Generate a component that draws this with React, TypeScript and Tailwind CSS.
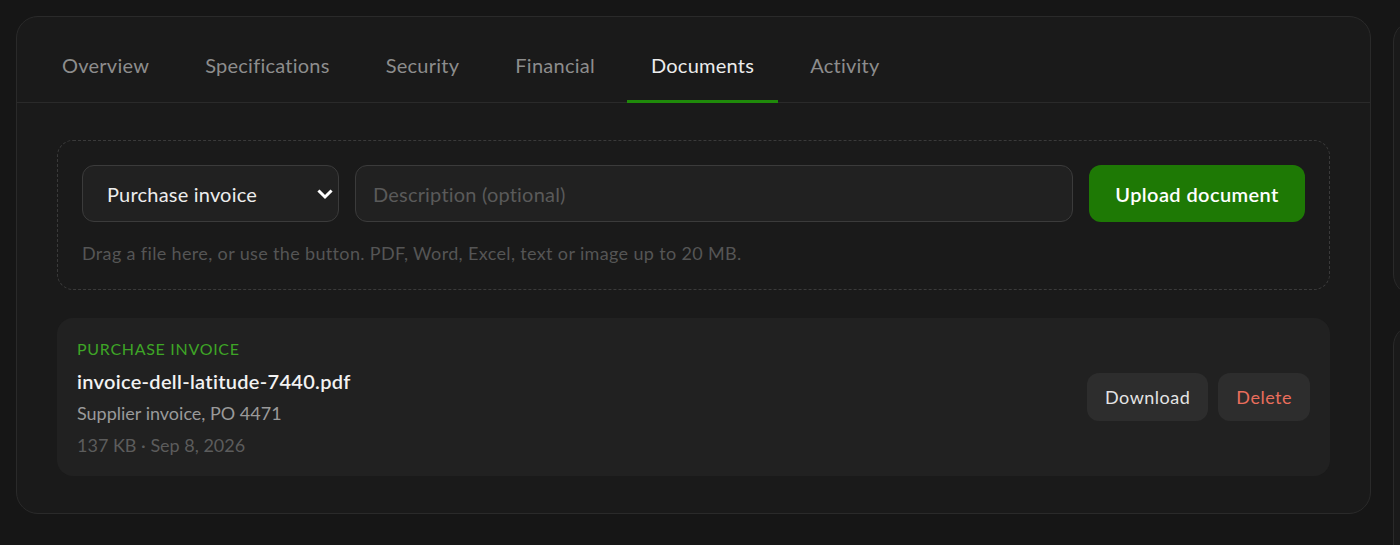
import React from "react";

const tabs = ["Overview", "Specifications", "Security", "Financial", "Documents", "Activity"];

export default function App() {
  return (
    <div
      className="h-[545px] w-full bg-[#161616] p-4 overflow-hidden"
      style={{ fontFamily: "Lato, 'Noto Sans', sans-serif" }}
    >
      <div className="flex gap-[22px] items-start">
        <div className="w-[1355px] shrink-0 rounded-[22px] border border-[#2a2a2a] bg-[#1a1a1a] pt-px">
          <div className="flex gap-2 border-b border-[#2a2a2a] px-[21px]">
            {tabs.map((t) => {
              const active = t === "Documents";
              return (
                <div
                  key={t}
                  className={`relative px-6 h-[84px] pt-[10px] flex items-center text-[20px] tracking-[0.25px] ${
                    active ? "text-[#ececec]" : "text-[#8d8d8d]"
                  }`}
                >
                  {t}
                  {active && (
                    <div className="absolute left-0 right-0 -bottom-px h-[3px] bg-[#1f8a0a]" />
                  )}
                </div>
              );
            })}
          </div>

          <div className="px-10 pt-[37px] pb-[37px] flex flex-col gap-7">
            <div className="rounded-[16px] border border-dashed border-[#3a3a3a] p-6 flex flex-col gap-[19px]">
              <div className="flex gap-4 items-center">
                <div className="w-[257px] h-[57px] rounded-[12px] border border-[#3b3b3b] bg-[#212121] flex items-center justify-between pl-6 pr-[5px] text-[20px] text-[#ededed] tracking-[0.2px]">
                  <span>Purchase invoice</span>
                  <svg width="16" height="12" viewBox="0 0 16 12" fill="none">
                    <path d="M2.5 3.5 L8 9 L13.5 3.5" stroke="#ffffff" strokeWidth="3" strokeLinecap="square" />
                  </svg>
                </div>
                <div className="flex-1 h-[57px] rounded-[12px] border border-[#3b3b3b] bg-[#212121] flex items-center px-[17px] text-[20px] text-[#5a5a5a] tracking-[0.2px]">
                  Description (optional)
                </div>
                <div className="w-[216px] h-[57px] rounded-[12px] bg-[#1e7905] flex items-center justify-center text-[20px] font-semibold text-white tracking-[0.4px]">
                  Upload document
                </div>
              </div>
              <div className="text-[18px] text-[#555555] leading-[24px] tracking-[0.35px]">
                Drag a file here, or use the button. PDF, Word, Excel, text or image up to 20 MB.
              </div>
            </div>

            <div className="rounded-[16px] bg-[#212121] px-5 py-[15px] flex items-center justify-between">
              <div className="flex flex-col">
                <div className="text-[16px] leading-[32px] tracking-[0.7px] text-[#3ea526] uppercase">
                  Purchase invoice
                </div>
                <div className="text-[20px] leading-[32px] font-semibold text-[#f2f2f2] tracking-[0.3px]">
                  invoice-dell-latitude-7440.pdf
                </div>
                <div className="text-[18px] leading-[32px] text-[#9a9a9a]">
                  Supplier invoice, PO 4471
                </div>
                <div className="text-[18px] leading-[32px] text-[#5c5c5c]">
                  137 KB · Sep 8, 2026
                </div>
              </div>
              <div className="flex gap-[10px]">
                <div className="h-[48px] px-[18px] rounded-[12px] bg-[#2d2d2d] flex items-center text-[18px] text-[#e4e4e4] tracking-[0.5px]">
                  Download
                </div>
                <div className="h-[48px] px-[18px] rounded-[12px] bg-[#2d2d2d] flex items-center text-[18px] text-[#ea6e5c] tracking-[0.5px]">
                  Delete
                </div>
              </div>
            </div>
          </div>
        </div>

        <div className="w-[300px] shrink-0 flex flex-col gap-7 pt-[4px]">
          <div className="h-[276px] rounded-[22px] border border-[#2a2a2a] bg-[#1a1a1a]" />
          <div className="h-[300px] rounded-[22px] border border-[#2a2a2a] bg-[#1a1a1a]" />
        </div>
      </div>
    </div>
  );
}
